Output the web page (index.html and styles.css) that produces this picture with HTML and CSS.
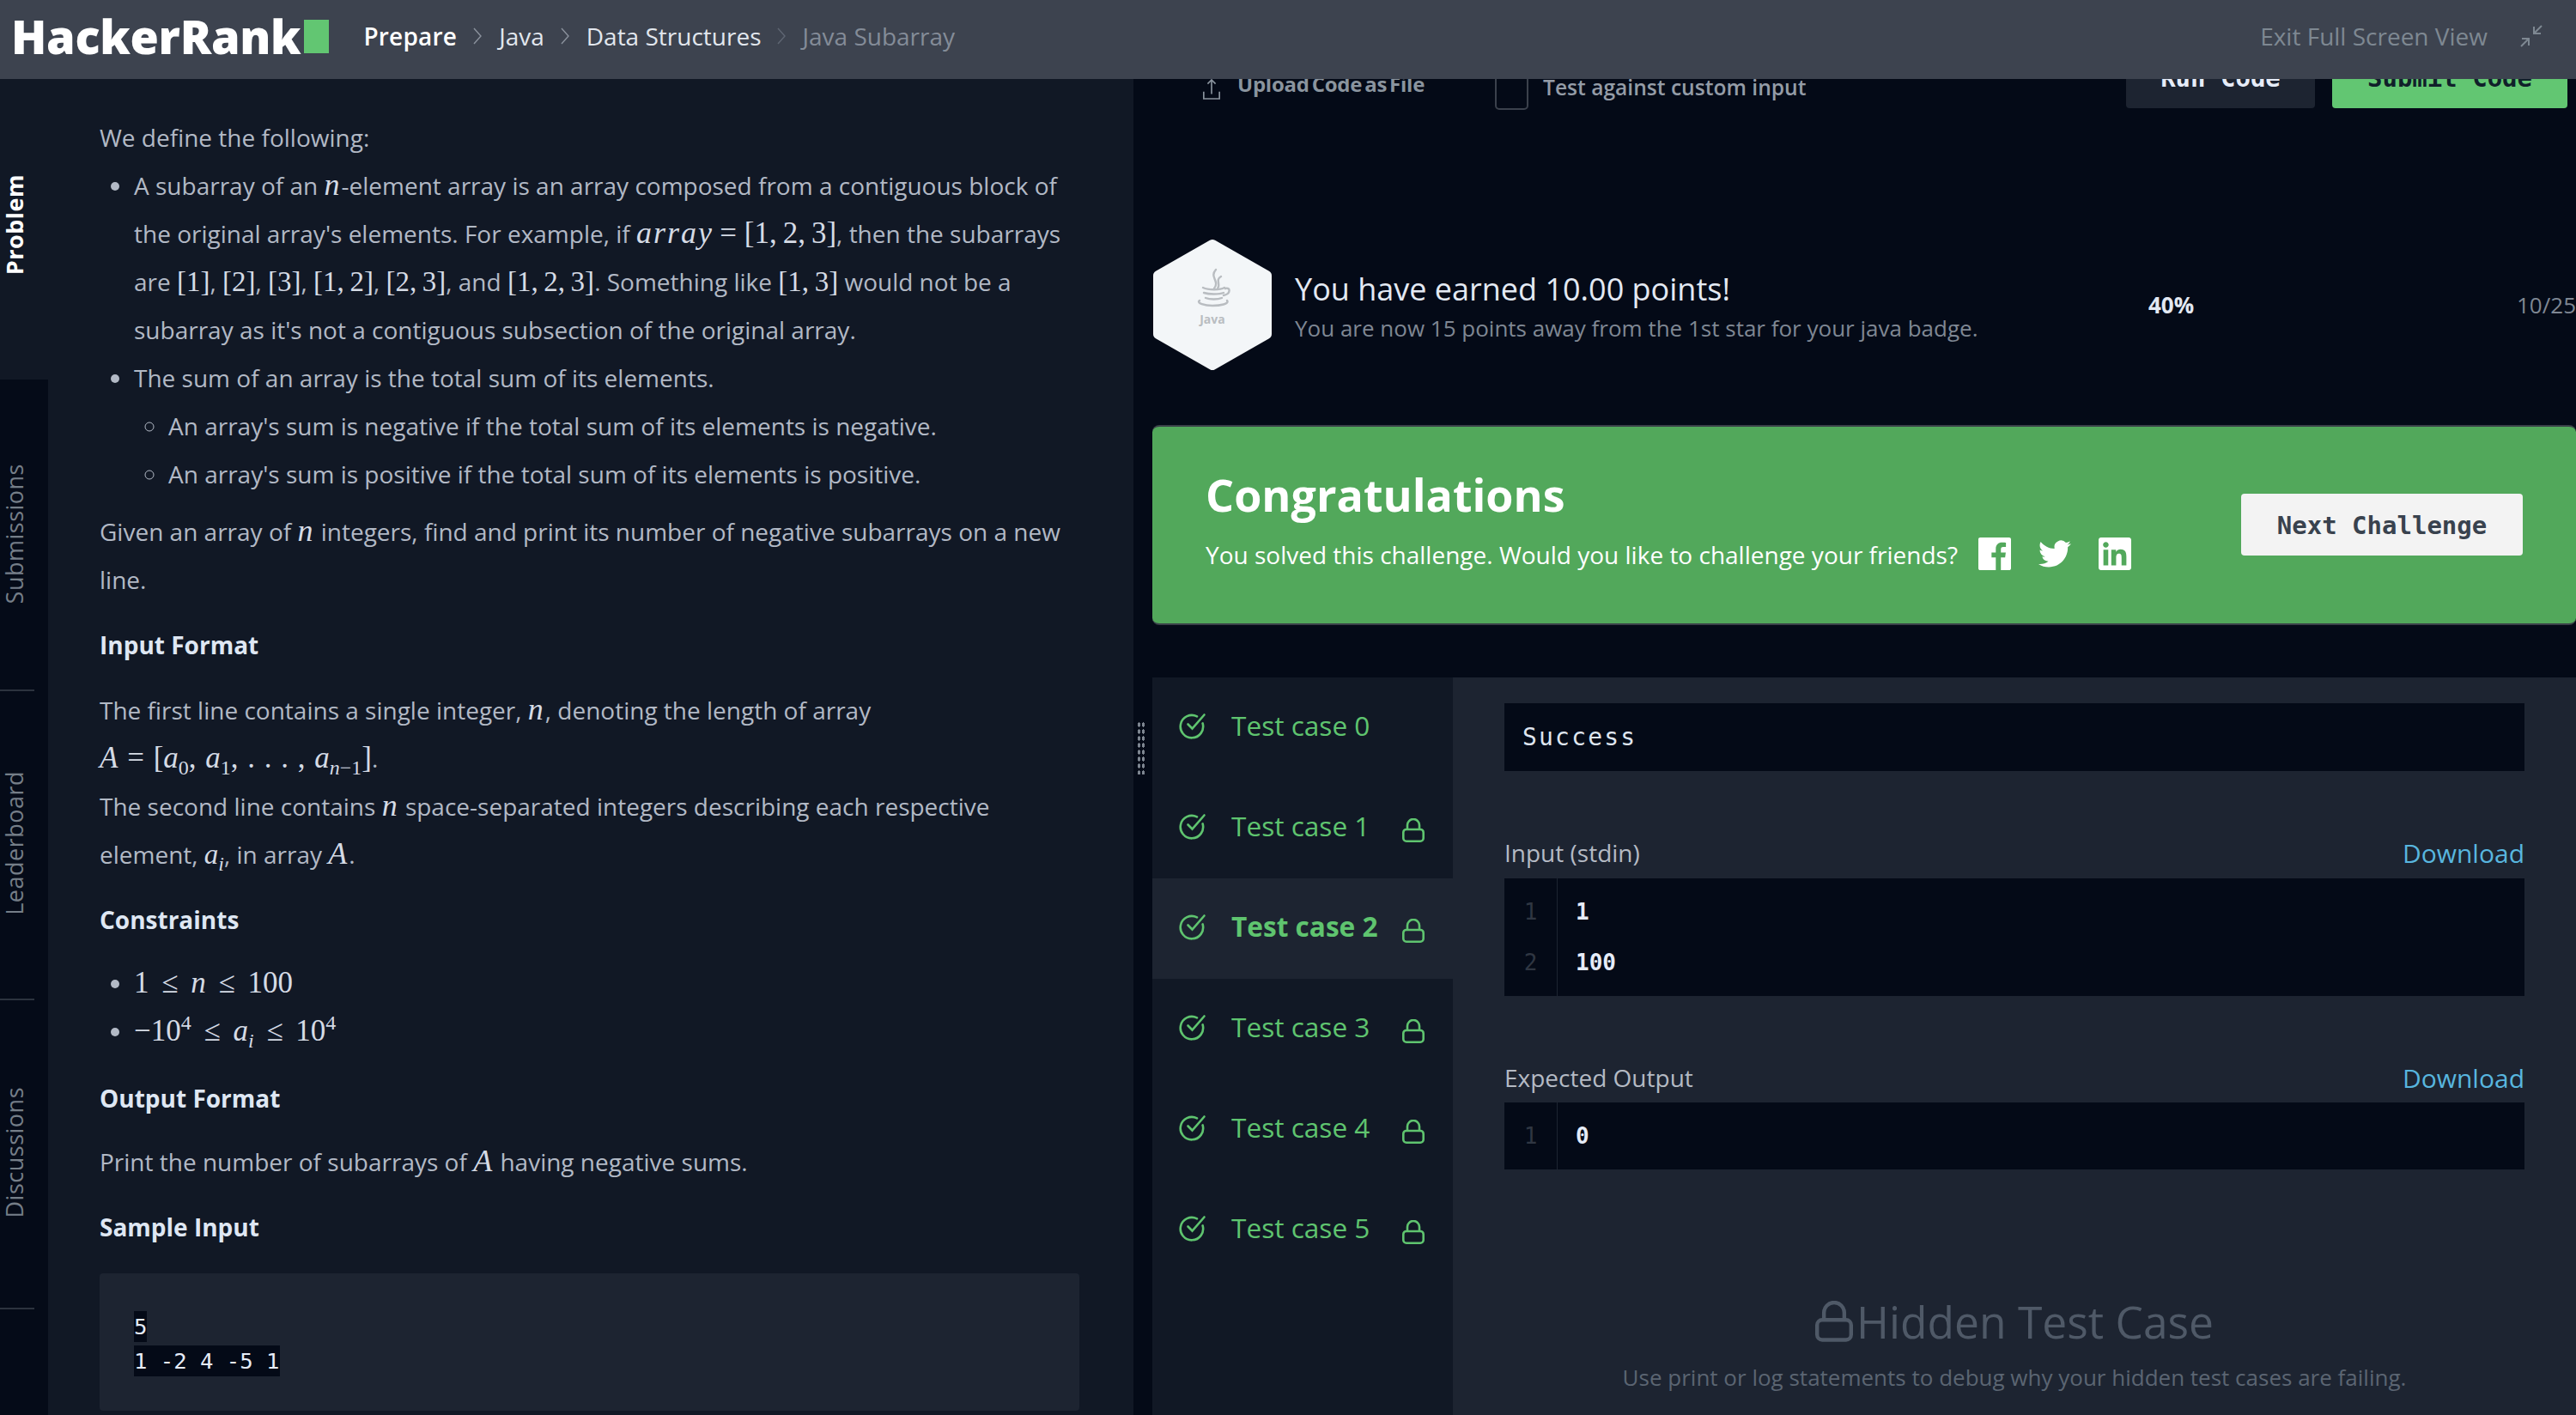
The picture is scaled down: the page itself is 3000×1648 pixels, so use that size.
FILE: index.html
```html
<!DOCTYPE html>
<html lang="en">
<head>
    <meta charset="UTF-8">
    <meta name="viewport" content="width=device-width, initial-scale=1.0">
    <title>Java Subarray | HackerRank</title>
    <link rel="stylesheet" href="styles.css">
</head>
<body>
    <svg class="icon-defs" width="0" height="0">
        <symbol id="lock" viewBox="0 0 26 28">
            <path d="M6 13V8a7 7 0 0 1 14 0v5" fill="none" stroke="currentColor" stroke-width="2.6"/>
            <rect x="1.3" y="13" width="23.4" height="13.7" rx="3.5" fill="none" stroke="currentColor" stroke-width="2.6"/>
        </symbol>
        <symbol id="check" viewBox="0 0 32 32">
            <path d="M27.6 12.4A13.2 13.2 0 1 1 21 4.4" fill="none" stroke="currentColor" stroke-width="2.6" stroke-linecap="round"/>
            <path d="M10.5 13.5l5 5L29.5 2.5" fill="none" stroke="currentColor" stroke-width="2.6" stroke-linecap="round"/>
        </symbol>
    </svg>

    <header class="topbar">
        <div class="logo">HackerRank<span class="logo-mark"></span></div>
        <nav class="crumbs">
            <a class="crumb crumb-first">Prepare</a>
            <svg class="chevron" viewBox="0 0 12 24"><path d="M2 3l8 9-8 9" fill="none" stroke="currentColor" stroke-width="1.4"/></svg>
            <a class="crumb">Java</a>
            <svg class="chevron" viewBox="0 0 12 24"><path d="M2 3l8 9-8 9" fill="none" stroke="currentColor" stroke-width="1.4"/></svg>
            <a class="crumb">Data Structures</a>
            <svg class="chevron chevron-dim" viewBox="0 0 12 24"><path d="M2 3l8 9-8 9" fill="none" stroke="currentColor" stroke-width="1.4"/></svg>
            <a class="crumb crumb-current">Java Subarray</a>
        </nav>
        <div class="exit-full">
            <span>Exit Full Screen View</span>
            <svg class="exit-icon" viewBox="0 0 26 26"><path d="M25 1l-9 9M16 2v8h8M1 25l9-9M10 24v-8H2" fill="none" stroke="currentColor" stroke-width="2"/></svg>
        </div>
    </header>

    <main class="workspace">
        <aside class="side-tabs">
            <div class="side-tab side-tab-active"><span>Problem</span></div>
            <div class="side-tab"><span>Submissions</span></div>
            <div class="side-tab"><span>Leaderboard</span></div>
            <div class="side-tab"><span>Discussions</span></div>
        </aside>

        <section class="problem">
            <p>We define the following:</p>
            <ul class="bullets">
                <li>A subarray of an <i class="math mi">n</i>-element array is an array composed from a contiguous block of the original array's elements. For example, if <i class="math mi">array</i> <span class="math math-eq">= [1,&thinsp;2,&thinsp;3]</span>, then the subarrays are <span class="math">[1]</span>, <span class="math">[2]</span>, <span class="math">[3]</span>, <span class="math">[1,&thinsp;2]</span>, <span class="math">[2,&thinsp;3]</span>, and <span class="math">[1,&thinsp;2,&thinsp;3]</span>. Something like <span class="math">[1,&thinsp;3]</span> would not be a subarray as it's not a contiguous subsection of the original array.</li>
                <li>The sum of an array is the total sum of its elements.
                    <ul class="sub-bullets">
                        <li>An array's sum is negative if the total sum of its elements is negative.</li>
                        <li>An array's sum is positive if the total sum of its elements is positive.</li>
                    </ul>
                </li>
            </ul>
            <p class="para-gap">Given an array of <i class="math mi">n</i> integers, find and print its number of negative subarrays on a new line.</p>
            <h4>Input Format</h4>
            <p>The first line contains a single integer, <i class="math mi">n</i>, denoting the length of array<br>
            <span class="math math-seq"><i>A</i> = [<i>a</i><sub>0</sub>, <i>a</i><sub>1</sub>, . . . , <i>a</i><sub><i>n</i>−1</sub>]</span>.<br>
            The second line contains <i class="math mi">n</i> space-separated integers describing each respective element, <span class="math"><i>a</i><sub><i>i</i></sub></span>, in array <i class="math mi">A</i>.</p>
            <h4 class="before-list">Constraints</h4>
            <ul class="bullets">
                <li><span class="math math-wide">1 ≤ <i>n</i> ≤ 100</span></li>
                <li><span class="math math-wide">−10<sup>4</sup> ≤ <i>a</i><sub><i>i</i></sub> ≤ 10<sup>4</sup></span></li>
            </ul>
            <h4 class="after-list">Output Format</h4>
            <p>Print the number of subarrays of <i class="math mi">A</i> having negative sums.</p>
            <h4>Sample Input</h4>
            <pre class="sample"><code>5
1 -2 4 -5 1</code></pre>
        </section>

        <div class="splitter">
            <div class="grip"></div>
        </div>

        <section class="results">
            <div class="action-row">
                <div class="upload">
                    <svg class="upload-icon" viewBox="0 0 24 28"><path d="M12 2v18M7 7l5-5 5 5M2 17v9h20v-9" fill="none" stroke="currentColor" stroke-width="1.8"/></svg>
                    <span>Upload Code as File</span>
                </div>
                <div class="custom-input">
                    <span class="checkbox"></span>
                    <span>Test against custom input</span>
                </div>
                <button class="btn btn-run">Run Code</button>
                <button class="btn btn-submit">Submit Code</button>
            </div>

            <div class="earned">
                <svg class="badge" viewBox="0 0 140 154">
                    <polygon points="70,7 133,43 133,111 70,147 7,111 7,43" fill="#f3f6f8" stroke="#f3f6f8" stroke-width="12" stroke-linejoin="round"/>
                    <g fill="none" stroke="#b9bdc1" stroke-width="2.4" stroke-linecap="round">
                        <path d="M74 36c-8 9 5 13-2 22M80 44c-7 4 0 9-4 14"/>
                        <path d="M59 57c6 3 20 3 25 0M60 63c6 2 18 2 23 0M62 69c5 2 14 2 19 0"/>
                        <path d="M85 58c6-2 7 6-2 8M55 72c-4 3 6 6 15 6s20-2 17-6"/>
                    </g>
                    <text class="badge-label" x="70" y="99" text-anchor="middle">Java</text>
                </svg>
                <div class="earned-text">
                    <div class="earned-title">You have earned 10.00 points!</div>
                    <div class="earned-sub">You are now 15 points away from the 1st star for your java badge.</div>
                </div>
                <div class="percent">40%</div>
                <div class="score">10/25</div>
            </div>

            <div class="congrats">
                <div class="congrats-text">
                    <h2>Congratulations</h2>
                    <div class="share">
                        <span>You solved this challenge. Would you like to challenge your friends?</span>
                        <svg class="social" viewBox="0 0 24 24"><path d="M22.675 0H1.325C.593 0 0 .593 0 1.325v21.351C0 23.407.593 24 1.325 24H12.82v-9.294H9.692v-3.622h3.128V8.413c0-3.1 1.893-4.788 4.659-4.788 1.325 0 2.463.099 2.795.143v3.24l-1.918.001c-1.504 0-1.795.715-1.795 1.763v2.313h3.587l-.467 3.622h-3.12V24h6.116c.73 0 1.323-.593 1.323-1.325V1.325C24 .593 23.407 0 22.675 0z"/></svg>
                        <svg class="social" viewBox="0 0 24 24"><path d="M23.953 4.57a10 10 0 01-2.825.775 4.958 4.958 0 002.163-2.723c-.951.555-2.005.959-3.127 1.184a4.92 4.92 0 00-8.384 4.482C7.69 8.095 4.067 6.13 1.64 3.162a4.822 4.822 0 00-.666 2.475c0 1.71.87 3.213 2.188 4.096a4.904 4.904 0 01-2.228-.616v.06a4.923 4.923 0 003.946 4.827 4.996 4.996 0 01-2.212.085 4.936 4.936 0 004.604 3.417 9.867 9.867 0 01-6.102 2.105c-.39 0-.779-.023-1.17-.067a13.995 13.995 0 007.557 2.209c9.053 0 13.998-7.496 13.998-13.985 0-.21 0-.42-.015-.63A9.935 9.935 0 0024 4.59z"/></svg>
                        <svg class="social" viewBox="0 0 24 24"><path d="M20.447 20.452h-3.554v-5.569c0-1.328-.027-3.037-1.852-3.037-1.853 0-2.136 1.445-2.136 2.939v5.667H9.351V9h3.414v1.561h.046c.477-.9 1.637-1.85 3.37-1.85 3.601 0 4.267 2.37 4.267 5.455v6.286zM5.337 7.433c-1.144 0-2.063-.926-2.063-2.065 0-1.138.92-2.063 2.063-2.063 1.14 0 2.064.925 2.064 2.063 0 1.139-.925 2.065-2.064 2.065zm1.782 13.019H3.555V9h3.564v11.452zM22.225 0H1.771C.792 0 0 .774 0 1.729v20.542C0 23.227.792 24 1.771 24h20.451C23.2 24 24 23.227 24 22.271V1.729C24 .774 23.2 0 22.222 0h.003z"/></svg>
                    </div>
                </div>
                <button class="btn-next">Next Challenge</button>
            </div>

            <div class="testcases">
                <div class="case-list">
                    <div class="case"><svg class="case-check"><use href="#check"/></svg><span>Test case 0</span></div>
                    <div class="case"><svg class="case-check"><use href="#check"/></svg><span>Test case 1</span><svg class="case-lock"><use href="#lock"/></svg></div>
                    <div class="case case-active"><svg class="case-check"><use href="#check"/></svg><span>Test case 2</span><svg class="case-lock"><use href="#lock"/></svg></div>
                    <div class="case"><svg class="case-check"><use href="#check"/></svg><span>Test case 3</span><svg class="case-lock"><use href="#lock"/></svg></div>
                    <div class="case"><svg class="case-check"><use href="#check"/></svg><span>Test case 4</span><svg class="case-lock"><use href="#lock"/></svg></div>
                    <div class="case"><svg class="case-check"><use href="#check"/></svg><span>Test case 5</span><svg class="case-lock"><use href="#lock"/></svg></div>
                </div>
                <div class="case-detail">
                    <div class="status">Success</div>
                    <div class="io-head io-head-input"><span>Input (stdin)</span><a class="download">Download</a></div>
                    <div class="io-box">
                        <div class="gutter"><span>1</span><span>2</span></div>
                        <div class="io-lines"><span>1</span><span>100</span></div>
                    </div>
                    <div class="io-head io-head-output"><span>Expected Output</span><a class="download">Download</a></div>
                    <div class="io-box">
                        <div class="gutter"><span>1</span></div>
                        <div class="io-lines"><span>0</span></div>
                    </div>
                    <div class="hidden-note">
                        <div class="hidden-title"><svg class="hidden-lock"><use href="#lock"/></svg>Hidden Test Case</div>
                        <div class="hidden-sub">Use print or log statements to debug why your hidden test cases are failing.</div>
                    </div>
                </div>
            </div>
        </section>
    </main>
</body>
</html>
```

FILE: styles.css
```css
* {
    box-sizing: border-box;
}

html, body {
    margin: 0;
    padding: 0;
    height: 1648px;
    overflow: hidden;
}

body {
    font-family: "Open Sans", sans-serif;
    font-size: 28px;
    background-color: #040a17;
    color: #b2b9c5;
}

.icon-defs {
    position: absolute;
}

/* top bar */
.topbar {
    height: 92px;
    padding-bottom: 8px;
    background-color: #3d434f;
    display: flex;
    align-items: center;
    position: relative;
    z-index: 2;
}

.logo {
    font-family: "Open Sans", sans-serif;
    font-weight: 800;
    font-size: 54px;
    line-height: 40px;
    color: #fff;
    margin-left: 13px;
    display: flex;
    align-items: center;
    letter-spacing: -0.3px;
}

.logo-mark {
    width: 29px;
    height: 39px;
    margin-left: 4px;
    background-color: #62c672;
}

.crumbs {
    display: flex;
    align-items: center;
    margin-left: 40px;
    color: #e2e7ee;
}

.crumb-first {
    font-weight: 600;
    letter-spacing: 0.2px;
    color: #fff;
}

.crumb-current {
    color: #848c98;
}

.chevron {
    width: 12px;
    height: 24px;
    margin: 0 19px 0 18px;
    color: #8b929d;
}

.chevron-dim {
    margin-right: 18px;
    color: #5f6673;
}

.exit-full {
    margin-left: auto;
    margin-right: 39px;
    display: flex;
    align-items: center;
    color: #7e8892;
}

.exit-icon {
    width: 26px;
    height: 26px;
    margin-left: 38px;
}

/* main area */
.workspace {
    display: flex;
    height: 1556px;
    overflow: hidden;
}

.side-tabs {
    width: 56px;
    flex-shrink: 0;
    background-color: #050b18;
    margin-top: -10px;
}

.side-tab {
    height: 360px;
    display: flex;
    align-items: center;
    position: relative;
    color: #757e88;
}

.side-tab::after {
    content: "";
    position: absolute;
    left: 0;
    bottom: -3px;
    width: 40px;
    height: 2px;
    background-color: #2c333e;
}

.side-tab span {
    writing-mode: vertical-rl;
    transform: rotate(180deg);
    font-size: 27px;
    width: 30px;
    line-height: 30px;
    text-align: center;
    margin: 0 auto 0 2px;
    letter-spacing: 0.5px;
}

.side-tab-active {
    background-color: #111825;
    color: #fff;
}

.side-tab-active::after {
    display: none;
}

.side-tab-active span {
    font-weight: 700;
}

/* problem statement */
.problem {
    width: 1264px;
    flex-shrink: 0;
    background-color: #111825;
    padding: 40px 0 0 60px;
    line-height: 56px;
}

.problem p {
    margin: 0;
    width: 1130px;
}

.problem .para-gap {
    margin-top: 11px;
}

.bullets {
    margin: 0;
    padding: 0 0 0 40px;
    width: 1130px;
}

.sub-bullets {
    margin: 0;
    padding: 0 0 0 40px;
    list-style-type: circle;
}

.problem h4 {
    margin: 20px 0 20px;
    font-size: 28px;
    font-weight: 700;
    color: #dfe7f3;
    line-height: 56px;
}

.problem h4.before-list {
    margin-bottom: 18px;
}

.problem h4.after-list {
    margin-top: 22px;
    margin-bottom: 18px;
}

.math {
    font-family: "Liberation Serif", serif;
    font-size: 33px;
    line-height: 40px;
    color: #d5dbe5;
}

.mi {
    font-size: 36px;
    letter-spacing: 2px;
}

.math-eq {
    font-size: 35px;
}

.math-seq {
    font-size: 35px;
    word-spacing: 2px;
}

.math-wide {
    font-size: 35px;
    word-spacing: 6px;
}

.math sub, .math sup {
    font-size: 24px;
    line-height: 0;
}

.sample {
    margin: 26px 0 0;
    width: 1141px;
    height: 160px;
    background-color: #1d2431;
    border-radius: 4px;
    padding: 42px 40px 0;
    font-family: "DejaVu Sans Mono", monospace;
    font-size: 25.6px;
    line-height: 40px;
    color: #e6ecf8;
}

.sample code {
    font-family: inherit;
    background-color: #040a17;
    padding: 3px 0;
}

/* splitter */
.splitter {
    width: 22px;
    flex-shrink: 0;
    position: relative;
}

.grip {
    position: absolute;
    left: 4px;
    top: 748px;
    width: 10px;
    height: 62px;
    background-image: radial-gradient(#7d8590 1.6px, transparent 1.8px);
    background-size: 5px 8px;
}

/* right side */
.results {
    flex: 1;
    min-width: 0;
    overflow: hidden;
}

.action-row {
    height: 34px;
    display: flex;
    align-items: flex-start;
    position: relative;
}

.upload {
    display: flex;
    align-items: center;
    margin-left: 58px;
    width: 341px;
    height: 34px;
    margin-top: -12px;
    font-size: 24px;
    font-weight: 700;
    letter-spacing: -0.25px;
    word-spacing: -3px;
    color: #8a949e;
}

.upload-icon {
    width: 22px;
    height: 26px;
    margin-right: 19px;
    margin-top: 14px;
}

.custom-input {
    display: flex;
    align-items: center;
    font-size: 24.6px;
    font-weight: 600;
    color: #949ca7;
    height: 34px;
    margin-top: -8px;
}

.checkbox {
    width: 39px;
    height: 40px;
    margin-top: 2px;
    margin-right: 17px;
    border: 2px solid #3b414c;
    border-radius: 5px;
    position: relative;
    top: 6px;
    flex-shrink: 0;
}

.btn {
    position: absolute;
    bottom: 0;
    height: 70px;
    border: 0;
    border-radius: 4px;
    font-family: "DejaVu Sans Mono", monospace;
    font-weight: 700;
    font-size: 29px;
}

.btn-run {
    left: 1134px;
    width: 220px;
    background-color: #1d2431;
    color: #e6ecf8;
}

.btn-submit {
    left: 1374px;
    width: 274px;
    background-color: #62c672;
    color: #10202a;
}

.earned {
    display: flex;
    align-items: center;
    height: 160px;
    margin-top: 149px;
    padding-left: 0;
    white-space: nowrap;
}

.badge {
    width: 140px;
    height: 154px;
    flex-shrink: 0;
}

.badge-label {
    font-family: "Open Sans", sans-serif;
    font-size: 14px;
    font-weight: 700;
    fill: #b9bdc1;
}

.earned-text {
    margin-left: 26px;
    padding-top: 4px;
    width: 994px;
}

.earned-title {
    font-size: 36px;
    line-height: 50px;
    color: #e3e9f3;
}

.earned-sub {
    font-size: 26px;
    line-height: 40px;
    color: #7f8793;
}

.percent {
    font-size: 26px;
    font-weight: 700;
    color: #e3e9f3;
}

.score {
    margin-left: auto;
    font-size: 26px;
    color: #7f8793;
}

.congrats {
    margin-top: 60px;
    height: 233px;
    background-color: #52a85b;
    border: 2px solid #3a4048;
    border-width: 2px 0;
    border-radius: 8px;
    display: flex;
    align-items: center;
    padding: 0 62px;
    justify-content: space-between;
}

.congrats-text {
    margin-bottom: 16px;
}

.congrats h2 {
    margin: 0 0 15px;
    font-size: 52px;
    font-weight: 700;
    line-height: 70px;
    color: #fff;
}

.share {
    display: flex;
    align-items: center;
    color: #fff;
    height: 40px;
    white-space: nowrap;
}

.social {
    width: 38px;
    height: 38px;
    fill: #fff;
    margin-left: 24px;
    margin-top: -2px;
    flex-shrink: 0;
}

.social + .social {
    margin-left: 32px;
}

.btn-next {
    width: 328px;
    height: 72px;
    margin-top: -1px;
    padding-top: 3px;
    border: 0;
    border-radius: 4px;
    background-color: #f3f3f3;
    color: #39424e;
    font-family: "DejaVu Sans Mono", monospace;
    font-weight: 700;
    font-size: 29px;
}

/* test cases */
.testcases {
    margin-top: 61px;
    display: flex;
    height: 860px;
    background-color: #1d2431;
}

.case-list {
    width: 350px;
    flex-shrink: 0;
    background-color: #111825;
}

.case {
    height: 117px;
    display: flex;
    align-items: center;
    padding: 0 33px 3px 31px;
    color: #5fc46f;
    font-size: 31.6px;
}

.case span {
    margin-bottom: 4px;
}

.case-active {
    background-color: #1d2431;
    font-weight: 700;
}

.case-check {
    width: 32px;
    height: 32px;
    margin-right: 29px;
    flex-shrink: 0;
}

.case-lock {
    width: 26px;
    height: 28px;
    margin-left: auto;
    margin-top: 8px;
    flex-shrink: 0;
}

.case-detail {
    flex: 1;
    padding: 30px 60px 0;
}

.status {
    height: 79px;
    background-color: #040a17;
    padding: 0 21px;
    line-height: 79px;
    font-family: "DejaVu Sans Mono", monospace;
    font-size: 28px;
    letter-spacing: 2.2px;
    color: #dfe5ef;
}

.io-head {
    display: flex;
    justify-content: space-between;
    align-items: center;
    height: 40px;
    color: #b4bac4;
}

.io-head-input {
    margin-top: 75px;
    margin-bottom: 10px;
}

.io-head-output {
    margin-top: 75px;
    margin-bottom: 9px;
}

.download {
    font-size: 30px;
    color: #58b6df;
}

.io-box {
    display: flex;
    background-color: #040a17;
    padding: 10px 0 9px;
    font-family: "DejaVu Sans Mono", monospace;
    font-size: 26px;
    line-height: 59px;
}

.gutter {
    width: 62px;
    margin: -10px 0 -9px;
    padding: 10px 0 9px;
    border-right: 1px solid #1d2431;
    text-align: center;
    color: #2f3642;
    display: flex;
    flex-direction: column;
}

.io-lines {
    padding-left: 21px;
    font-weight: 700;
    color: #e6ecf8;
    display: flex;
    flex-direction: column;
}

.hidden-note {
    margin-top: 145px;
    text-align: center;
    color: #4f5967;
}

.hidden-title {
    font-size: 51.5px;
    line-height: 64px;
    display: flex;
    align-items: center;
    justify-content: center;
}

.hidden-lock {
    width: 44px;
    height: 48px;
    margin-right: 4px;
}

.hidden-sub {
    margin-top: 13px;
    font-size: 26px;
    color: #5b6572;
    line-height: 40px;
}
```
